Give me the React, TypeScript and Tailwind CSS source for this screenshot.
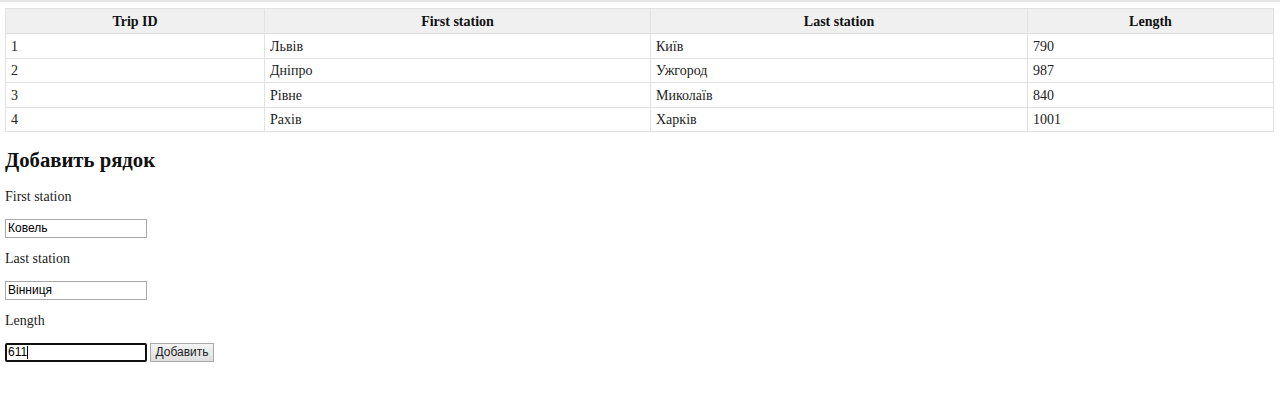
import { useState } from 'react';

interface Trip {
  id: number;
  first: string;
  last: string;
  length: number;
}

const initialTrips: Trip[] = [
  { id: 1, first: 'Львів', last: 'Київ', length: 790 },
  { id: 2, first: 'Дніпро', last: 'Ужгород', length: 987 },
  { id: 3, first: 'Рівне', last: 'Миколаїв', length: 840 },
  { id: 4, first: 'Рахів', last: 'Харків', length: 1001 },
];

const serif = 'font-["Liberation_Serif","Times_New_Roman",serif]';

export default function App() {
  const [trips, setTrips] = useState<Trip[]>(initialTrips);
  const [form, setForm] = useState({ first: 'Ковель', last: 'Вінниця', length: '611' });

  function addRow() {
    const len = parseInt(form.length, 10);
    if (!form.first || !form.last || isNaN(len)) return;
    setTrips(t => [...t, { id: t.length + 1, first: form.first, last: form.last, length: len }]);
  }

  return (
    <div className={`min-h-screen bg-white text-[#222] ${serif}`}>
      <div className="h-[2px] bg-[#e6e6e6]" />

      <table className="ml-[5px] mt-[6px] w-[1268px] table-fixed border-collapse text-[14px]">
        <colgroup>
          <col className="w-[259px]" />
          <col className="w-[386px]" />
          <col className="w-[377px]" />
          <col className="w-[246px]" />
        </colgroup>
        <thead>
          <tr className="bg-[#f0f0f0]">
            {['Trip ID', 'First station', 'Last station', 'Length'].map(h => (
              <th key={h} className="h-[25px] border border-[#e2e2e2] p-0 text-center font-bold text-[#111]">
                {h}
              </th>
            ))}
          </tr>
        </thead>
        <tbody>
          {trips.map(t => (
            <tr key={t.id}>
              <td className="h-[24.5px] border border-[#e2e2e2] pt-px pb-0 pl-[5px]">{t.id}</td>
              <td className="h-[24.5px] border border-[#e2e2e2] pt-px pb-0 pl-[5px]">{t.first}</td>
              <td className="h-[24.5px] border border-[#e2e2e2] pt-px pb-0 pl-[5px]">{t.last}</td>
              <td className="h-[24.5px] border border-[#e2e2e2] pt-px pb-0 pl-[5px]">{t.length}</td>
            </tr>
          ))}
        </tbody>
      </table>

      <div className="flex flex-col items-start pl-[5px]">
        <h2 className="mt-[16px] text-[20.7px] font-bold leading-[25px] text-[#111]">Добавить рядок</h2>

        <p className="mt-[15px] text-[14px] leading-[17px]">First station</p>
        <input
          value={form.first}
          onChange={e => setForm(f => ({ ...f, first: e.target.value }))}
          className='mt-[13.5px] h-[19px] w-[142px] border border-[#a9a9a9] bg-white px-[2px] font-["Liberation_Sans",Arial,sans-serif] text-[12px] text-black outline-none'
        />

        <p className="mt-[12.5px] text-[14px] leading-[17px]">Last station</p>
        <input
          value={form.last}
          onChange={e => setForm(f => ({ ...f, last: e.target.value }))}
          className='mt-[13.5px] h-[19px] w-[142px] border border-[#a9a9a9] bg-white px-[2px] font-["Liberation_Sans",Arial,sans-serif] text-[12px] text-black outline-none'
        />

        <p className="mt-[12.5px] text-[14px] leading-[17px]">Length</p>
        <div className="mt-[13.5px] flex items-center gap-[3px]">
          <div className='flex h-[19px] w-[142px] items-center rounded-[2px] border-2 border-[#111] bg-white px-[1px] font-["Liberation_Sans",Arial,sans-serif] text-[12px] text-black'>
            <input
              value={form.length}
              onChange={e => setForm(f => ({ ...f, length: e.target.value }))}
              className="w-[19px] bg-transparent p-0 outline-none"
            />
            <span className="h-[13px] w-px bg-black" />
          </div>
          <button
            onClick={addRow}
            className='h-[19px] w-[64px] border border-[#a9a9a9] bg-gradient-to-b from-[#f4f4f4] to-[#dedede] font-["Liberation_Sans",Arial,sans-serif] text-[12px] leading-none text-[#222]'
          >
            Добавить
          </button>
        </div>
      </div>
    </div>
  );
}
